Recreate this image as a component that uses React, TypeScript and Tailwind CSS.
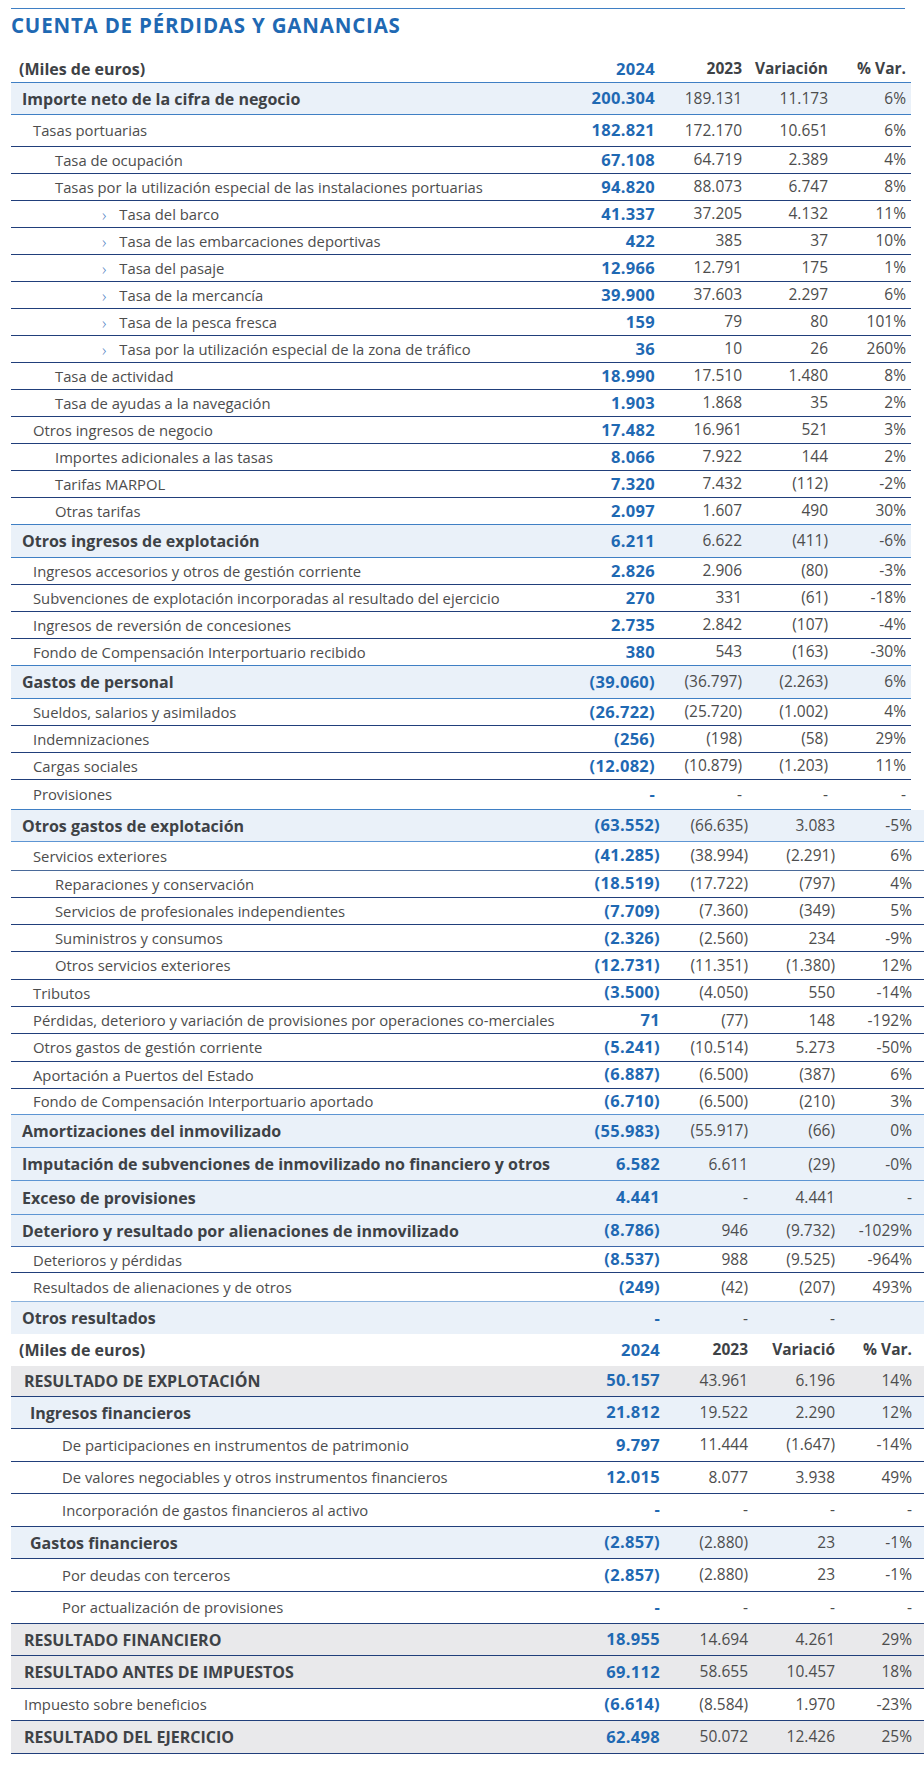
import React from 'react';

type Kind = 'hd' | 'b' | 'bi' | 't' | 'n0' | 'n1' | 'n2' | 'n3' | 'c2';
type R = [string, string, string, string, string, Kind, string, string];

// line colours
const NAVY = 'border-b border-[#213f7b]';
const BLUE = 'border-b border-[#3f7fc4]';
const LIGHT = 'border-b border-[#8ab2dd]';
const MID = 'border-b border-[#5d95d3]';
const NONE = '';

const topRows: R[] = [
  ['(Miles de euros)', '2024', '2023', 'Variación', '% Var.', 'hd', 'h-[27px]', BLUE],
  ['Importe neto de la cifra de negocio', '200.304', '189.131', '11.173', '6%', 'b', 'h-[32px]', BLUE],
  ['Tasas portuarias', '182.821', '172.170', '10.651', '6%', 'n1', 'h-[32px]', NAVY],
  ['Tasa de ocupación', '67.108', '64.719', '2.389', '4%', 'n2', 'h-[27px]', NAVY],
  ['Tasas por la utilización especial de las instalaciones portuarias', '94.820', '88.073', '6.747', '8%', 'n2', 'h-[27px]', NAVY],
  ['Tasa del barco', '41.337', '37.205', '4.132', '11%', 'n3', 'h-[27px]', NAVY],
  ['Tasa de las embarcaciones deportivas', '422', '385', '37', '10%', 'n3', 'h-[27px]', NAVY],
  ['Tasa del pasaje', '12.966', '12.791', '175', '1%', 'n3', 'h-[27px]', NAVY],
  ['Tasa de la mercancía', '39.900', '37.603', '2.297', '6%', 'n3', 'h-[27px]', NAVY],
  ['Tasa de la pesca fresca', '159', '79', '80', '101%', 'n3', 'h-[27px]', NAVY],
  ['Tasa por la utilización especial de la zona de tráfico', '36', '10', '26', '260%', 'n3', 'h-[27px]', NAVY],
  ['Tasa de actividad', '18.990', '17.510', '1.480', '8%', 'n2', 'h-[27px]', NAVY],
  ['Tasa de ayudas a la navegación', '1.903', '1.868', '35', '2%', 'n2', 'h-[27px]', NAVY],
  ['Otros ingresos de negocio', '17.482', '16.961', '521', '3%', 'n1', 'h-[27px]', NAVY],
  ['Importes adicionales a las tasas', '8.066', '7.922', '144', '2%', 'n2', 'h-[27px]', NAVY],
  ['Tarifas MARPOL', '7.320', '7.432', '(112)', '-2%', 'n2', 'h-[27px]', NAVY],
  ['Otras tarifas', '2.097', '1.607', '490', '30%', 'n2', 'h-[27px]', BLUE],
  ['Otros ingresos de explotación', '6.211', '6.622', '(411)', '-6%', 'b', 'h-[33px]', BLUE],
  ['Ingresos accesorios y otros de gestión corriente', '2.826', '2.906', '(80)', '-3%', 'n1', 'h-[27px]', NAVY],
  ['Subvenciones de explotación incorporadas al resultado del ejercicio', '270', '331', '(61)', '-18%', 'n1', 'h-[27px]', NAVY],
  ['Ingresos de reversión de concesiones', '2.735', '2.842', '(107)', '-4%', 'n1', 'h-[27px]', NAVY],
  ['Fondo de Compensación Interportuario recibido', '380', '543', '(163)', '-30%', 'n1', 'h-[27px]', BLUE],
  ['Gastos de personal', '(39.060)', '(36.797)', '(2.263)', '6%', 'b', 'h-[33px]', BLUE],
  ['Sueldos, salarios y asimilados', '(26.722)', '(25.720)', '(1.002)', '4%', 'n1', 'h-[27px]', NAVY],
  ['Indemnizaciones', '(256)', '(198)', '(58)', '29%', 'n1', 'h-[27px]', NAVY],
  ['Cargas sociales', '(12.082)', '(10.879)', '(1.203)', '11%', 'n1', 'h-[27px]', NAVY],
  ['Provisiones', '-', '-', '-', '-', 'n1', 'h-[30px]', BLUE],
];

const midRows: R[] = [
  ['Otros gastos de explotación', '(63.552)', '(66.635)', '3.083', '-5%', 'b', 'h-[32px]', MID],
  ['Servicios exteriores', '(41.285)', '(38.994)', '(2.291)', '6%', 'n1', 'h-[28.5px]', 'border-b border-[#4a6a9a]'],
  ['Reparaciones y conservación', '(18.519)', '(17.722)', '(797)', '4%', 'n2', 'h-[27.3px]', NAVY],
  ['Servicios de profesionales independientes', '(7.709)', '(7.360)', '(349)', '5%', 'n2', 'h-[27.3px]', NAVY],
  ['Suministros y consumos', '(2.326)', '(2.560)', '234', '-9%', 'n2', 'h-[27.3px]', NAVY],
  ['Otros servicios exteriores', '(12.731)', '(11.351)', '(1.380)', '12%', 'n2', 'h-[27.3px]', NAVY],
  ['Tributos', '(3.500)', '(4.050)', '550', '-14%', 'n1', 'h-[27.3px]', NAVY],
  ['Pérdidas, deterioro y variación de provisiones por operaciones co-merciales', '71', '(77)', '148', '-192%', 'n1', 'h-[27.3px]', NAVY],
  ['Otros gastos de gestión corriente', '(5.241)', '(10.514)', '5.273', '-50%', 'n1', 'h-[27.3px]', NAVY],
  ['Aportación a Puertos del Estado', '(6.887)', '(6.500)', '(387)', '6%', 'n1', 'h-[27.3px]', NAVY],
  ['Fondo de Compensación Interportuario aportado', '(6.710)', '(6.500)', '(210)', '3%', 'n1', 'h-[26px]', MID],
  ['Amortizaciones del inmovilizado', '(55.983)', '(55.917)', '(66)', '0%', 'b', 'h-[33.3px]', MID],
  ['Imputación de subvenciones de inmovilizado no financiero y otros', '6.582', '6.611', '(29)', '-0%', 'b', 'h-[33.3px]', MID],
  ['Exceso de provisiones', '4.441', '-', '4.441', '-', 'b', 'h-[33.3px]', MID],
  ['Deterioro y resultado por alienaciones de inmovilizado', '(8.786)', '946', '(9.732)', '-1029%', 'b', 'h-[32.7px]', 'border-b border-[#3d66a8]'],
  ['Deterioros y pérdidas', '(8.537)', '988', '(9.525)', '-964%', 'n1', 'h-[25.6px]', NAVY],
  ['Resultados de alienaciones y de otros', '(249)', '(42)', '(207)', '493%', 'n1', 'h-[29.4px]', LIGHT],
  ['Otros resultados', '-', '-', '-', '', 'b', 'h-[31.6px]', NONE],
];

const botRows: R[] = [
  ['(Miles de euros)', '2024', '2023', 'Variació', '% Var.', 'hd', 'h-[31.7px]', NONE],
  ['RESULTADO DE EXPLOTACIÓN', '50.157', '43.961', '6.196', '14%', 't', 'h-[31.3px]', NAVY],
  ['Ingresos financieros', '21.812', '19.522', '2.290', '12%', 'bi', 'h-[32px]', NAVY],
  ['De participaciones en instrumentos de patrimonio', '9.797', '11.444', '(1.647)', '-14%', 'c2', 'h-[33px]', NAVY],
  ['De valores negociables y otros instrumentos financieros', '12.015', '8.077', '3.938', '49%', 'c2', 'h-[31.7px]', NAVY],
  ['Incorporación de gastos financieros al activo', '-', '-', '-', '-', 'c2', 'h-[33.3px]', NAVY],
  ['Gastos financieros', '(2.857)', '(2.880)', '23', '-1%', 'bi', 'h-[32px]', NAVY],
  ['Por deudas con terceros', '(2.857)', '(2.880)', '23', '-1%', 'c2', 'h-[33px]', NAVY],
  ['Por actualización de provisiones', '-', '-', '-', '-', 'c2', 'h-[31.7px]', NAVY],
  ['RESULTADO FINANCIERO', '18.955', '14.694', '4.261', '29%', 't', 'h-[32.7px]', NAVY],
  ['RESULTADO ANTES DE IMPUESTOS', '69.112', '58.655', '10.457', '18%', 't', 'h-[32.3px]', NAVY],
  ['Impuesto sobre beneficios', '(6.614)', '(8.584)', '1.970', '-23%', 'n0', 'h-[32.7px]', NAVY],
  ['RESULTADO DEL EJERCICIO', '62.498', '50.072', '12.426', '25%', 't', 'h-[32.3px]', NAVY],
];

const bgOf: Record<Kind, string> = {
  hd: '',
  b: 'bg-[#eaf1f9]',
  bi: 'bg-[#eaf1f9]',
  t: 'bg-[#e9e9eb]',
  n0: '',
  n1: '',
  n2: '',
  n3: '',
  c2: '',
};

const padOf: Record<Kind, string> = {
  hd: 'pl-[8px]',
  b: 'pl-[11px]',
  bi: 'pl-[19px]',
  t: 'pl-[13px]',
  n0: 'pl-[13px]',
  n1: 'pl-[22px]',
  n2: 'pl-[44px]',
  n3: 'pl-[91px]',
  c2: 'pl-[51px]',
};

function Line({ r, cols }: { r: R; cols: string }) {
  const [label, a, b, c, d, kind, h, line] = r;
  const bold = kind === 'hd' || kind === 'b' || kind === 'bi' || kind === 't';
  const hd = kind === 'hd';
  const num = hd ? 'font-bold text-[#3e4246]' : 'font-normal text-[#4d4d4d]';
  return (
    <div className={`${cols} items-center ${h} ${line} ${bgOf[kind]}`}>
      <div
        className={`${padOf[kind]} flex items-center gap-[13px] whitespace-nowrap ${
          bold ? 'text-[16px] font-bold text-[#3e4246]' : 'text-[14.8px] font-normal text-[#4d4d4d]'
        }`}
      >
        {kind === 'n3' && <span className="text-[#4f82c2] text-[17px] leading-none font-light">›</span>}
        <span>{label}</span>
      </div>
      <div className="text-right text-[16.5px] font-bold text-[#1f69b3] tracking-[0.3px]">{a}</div>
      <div className={`text-right text-[15.5px] ${num}`}>{b}</div>
      <div className={`text-right text-[15.5px] ${num}`}>{c}</div>
      <div className={`text-right text-[15.5px] ${num}`}>{d}</div>
    </div>
  );
}

export default function App() {
  const colsA = 'grid grid-cols-[1fr_90px_87px_86px_78px] pr-[5px]';
  const colsB = 'grid grid-cols-[1fr_91px_88px_87px_77px] pr-[12px]';
  return (
    <div className="w-[924px] h-[1766px] bg-white pt-[8px] font-['Open_Sans',sans-serif] overflow-hidden">
      <div className="ml-[11px] w-[894px] border-t border-[#3f7fc4]">
        <h1 className="h-[32px] leading-[32px] text-[20.5px] font-bold text-[#1f69b3] tracking-[0.8px]">
          CUENTA DE PÉRDIDAS Y GANANCIAS
        </h1>
      </div>
      <div className="ml-[11px] mt-[15px] w-[900px]">
        {topRows.map((r, i) => (
          <Line key={i} r={r} cols={colsA} />
        ))}
      </div>
      <div className="ml-[11px] w-[913px]">
        {midRows.map((r, i) => (
          <Line key={i} r={r} cols={colsB} />
        ))}
        {botRows.map((r, i) => (
          <Line key={i} r={r} cols={colsB} />
        ))}
      </div>
    </div>
  );
}
